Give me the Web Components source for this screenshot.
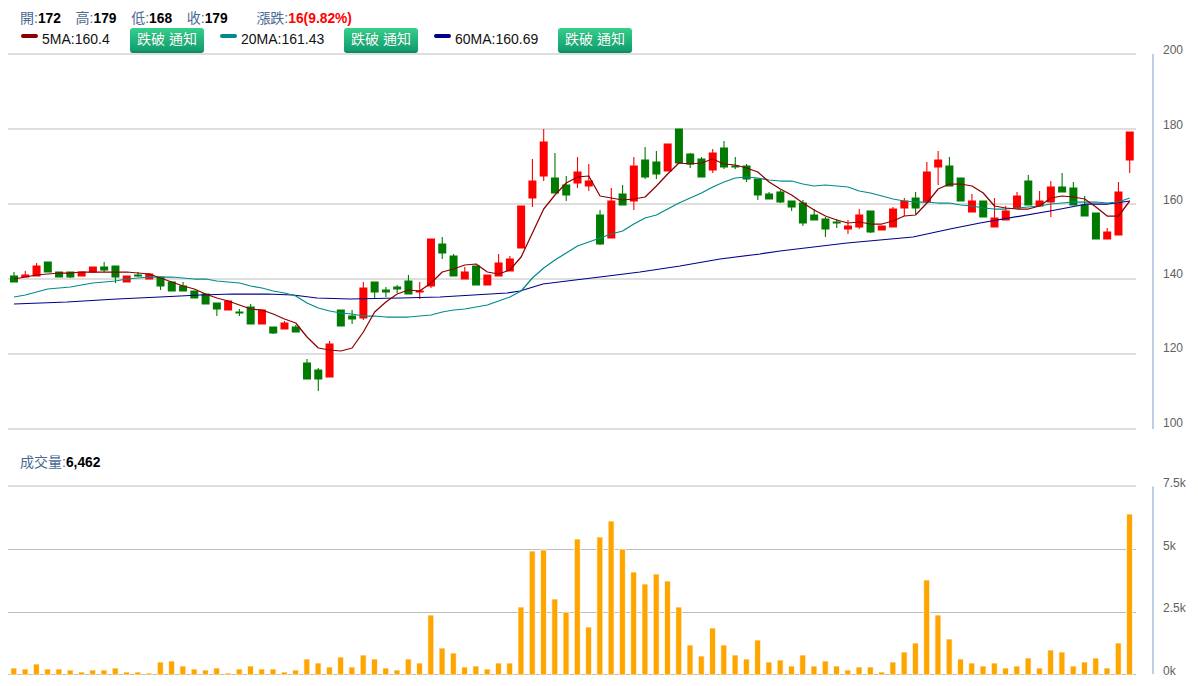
<!DOCTYPE html>
<html lang="zh-Hant">
<head>
<meta charset="utf-8">
<title>K線圖</title>
<style>
html,body{margin:0;padding:0;background:#fff;overflow:hidden}
</style>
</head>
<body>
<stock-view></stock-view>
<script>
const FONT = '"Liberation Sans","Noto Sans CJK TC",sans-serif';
const X = i => 14 + i * 11.27;

/* colour, body top, body bottom, wick top, wick bottom (screen pixels) */
const G='g',R='r';
const CANDLES=[
[G,276,282,272,282],[R,275,277,271,277],[R,266,276,263,276],[G,262,272,262,272],[G,272,277,272,277],
[G,272,277,272,278],[R,272,276,272,276],[R,267,272,267,272],[G,267,270,262,272],[G,266,277,266,283],
[R,276,282,276,282],[G,275,276,272,277],[R,274,279,273,279],[G,277,286,277,290],[G,282,291,282,291],
[G,286,291,282,291],[G,291,298,291,298],[G,294,304,294,304],[G,303,309,303,316],[R,301,310,301,310],
[G,312,313,309,316],[G,307,324,304,324],[R,310,324,310,324],[G,327,333,327,334],[R,323,329,321,329],
[G,327,332,325,332],[G,363,379,359,379],[G,370,379,368,391],[R,344,377,341,377],[G,310,326,310,326],
[G,316,319,310,324],[R,288,318,282,320],[G,282,292,282,299],[G,290,292,287,297],[G,287,289,285,293],
[G,281,294,275,294],[R,291,292,282,299],[R,239,286,239,288],[G,244,253,237,259],[G,256,276,254,276],
[R,272,279,267,279],[G,266,285,266,285],[R,275,285,275,285],[R,263,276,254,276],[R,259,271,256,271],
[R,206,248,206,248],[R,181,198,159,207],[R,142,176,129,181],[G,178,193,153,193],[G,185,195,176,201],
[R,172,183,157,188],[R,181,186,164,191],[G,215,244,210,245],[R,201,238,188,238],[G,194,205,185,205],
[R,166,201,157,210],[G,160,177,147,179],[G,162,174,151,179],[R,144,171,144,171],[G,129,163,129,163],
[G,154,164,153,168],[G,159,177,157,177],[R,153,170,149,173],[G,148,167,141,169],[G,166,167,157,169],
[G,166,179,164,182],[G,179,195,179,200],[G,194,199,192,199],[G,192,202,190,203],[G,201,207,201,211],
[G,203,223,200,226],[G,215,220,209,220],[G,219,229,217,237],[G,222,223,219,228],[R,226,229,220,234],
[R,215,227,209,229],[G,211,232,211,233],[R,226,230,226,230],[R,209,227,207,227],[R,201,208,198,216],
[G,198,208,192,214],[R,172,202,162,202],[R,160,167,151,185],[G,166,186,157,186],[G,178,201,178,201],
[R,201,212,194,212],[G,201,217,201,217],[R,218,227,198,227],[R,211,220,206,220],[R,196,208,192,208],
[G,181,205,175,205],[R,201,206,191,206],[R,187,202,181,217],[G,187,192,173,192],[G,188,205,182,205],
[G,205,216,196,216],[G,213,239,213,239],[R,232,239,228,239],[R,192,235,182,235],[R,132,160,132,173]
];
const MA5=[279,277,275,274,273,273,272,272,272,272,272,273,274,278,282,286,289,294,298,301,305,309,310,314,319,323,337,348,350,351,348,332,312,302,294,290,291,283,272,269,265,264,272,274,270,257,233,209,195,183,177,176,196,198,200,199,197,186,174,163,164,163,159,164,165,168,172,182,189,195,203,210,216,220,223,222,224,224,221,216,215,203,189,184,184,186,193,206,208,209,209,206,198,196,197,199,207,216,216,201];
const MA20=[297,295,292,289,288,287,285,283,282,281,279,278,277,277,277,278,279,279,281,282,283,286,288,291,293,296,303,308,311,313,314,316,316,317,317,317,316,315,312,310,309,307,305,301,297,291,278,268,260,253,246,242,238,234,231,224,218,215,209,203,198,193,187,182,178,177,178,180,181,181,184,186,185,186,187,191,193,196,199,201,202,202,203,203,205,206,208,209,209,208,207,206,204,203,202,202,202,203,202,198];
const MA60=[[14,304],[67,302],[117,299],[160,297],[200,295],[233,294],[267,294],[293,295],[317,298],[350,299],[400,298],[440,297],[507,293],[520,291],[543,284],[567,281],[600,277],[640,272],[680,266],[720,259],[760,254],[780,251],[847,243],[913,237],[950,229],[980,223],[1050,211],[1087,204],[1108,204],[1130,201]];
const VOL=[668,669,664,669,669,670,672,670,670,668,672,672,673,662,661,666,669,670,668,673,669,666,669,669,672,670,659,663,667,657,667,655,659,668,670,659,663,615,648,653,667,666,669,663,663,607,551,550,599,612,539,627,537,521,549,572,584,574,581,607,645,656,628,645,655,659,640,662,660,666,655,666,661,666,670,667,667,672,662,652,643,580,615,639,659,663,666,663,668,666,658,668,650,652,666,662,658,668,643,514];

const pts = (a) => a.map((y,i)=>`${X(i).toFixed(2)},${y}`).join(' ');
const hline = (y) => `<line x1="8" x2="1136" y1="${y}" y2="${y}" stroke="#bdbdbd"/>`;
const label = (t,y) => `<text x="1163" y="${y}">${t}</text>`;
const svgStyle = `:host{display:block}
svg{display:block;overflow:visible}
text{font:12px ${FONT};fill:#606060}`;

class NotifyButton extends HTMLElement{
  constructor(){super();this.attachShadow({mode:'open'}).innerHTML=`<style>
  :host{display:inline-flex;align-items:center;justify-content:center;box-sizing:border-box;width:74px;height:25px;
  padding-bottom:3px;border-radius:3px;color:#fff;font:14px ${FONT};white-space:pre;
  background:linear-gradient(#34d088,#129c70);border-bottom:2px solid #0f8a63;text-shadow:0 0 1px rgba(0,80,50,.3)}
  </style><slot></slot>`;}
}
class QuoteItem extends HTMLElement{
  constructor(){super();this.attachShadow({mode:'open'}).innerHTML=`<style>
  :host{display:inline-block;color:#4a6a94;white-space:nowrap}
  b{font-weight:bold;font-size:13.8px;color:var(--v,#000)}
  </style>${this.getAttribute('k')||''}:<b>${this.getAttribute('v')||''}</b>`;}
}
class MaLegend extends HTMLElement{
  constructor(){super();this.attachShadow({mode:'open'}).innerHTML=`<style>
  :host{display:flex;align-items:center;white-space:nowrap;color:#111;font-size:14px}
  i{display:block;width:17px;height:4px;border-radius:2px;background:${this.getAttribute('c')};margin:-9px 4px 0 0}
  span{display:block;width:var(--w);margin-top:-4px}
  </style><i></i><span>${this.getAttribute('t')}</span><slot></slot>`;}
}
class QuoteHeader extends HTMLElement{
  constructor(){super();this.attachShadow({mode:'open'}).innerHTML=`<style>
  :host{display:block;box-sizing:border-box;height:53px;padding:5px 0 0 20px;font:14px ${FONT}}
  .r1{display:flex;height:23px;align-items:center}
  .r2{display:flex;margin-left:1px}
  </style>
  <div class="r1"><slot name="q"></slot></div>
  <div class="r2"><slot name="m"></slot></div>`;}
}
class PricePanel extends HTMLElement{
  constructor(){super();
    const c={g:'#007a00',r:'#ff0000'};
    const candles=CANDLES.map((d,i)=>{const x=X(i),col=c[d[0]];
      return `<line x1="${x}" x2="${x}" y1="${d[3]}" y2="${d[4]}" stroke="${col}" stroke-width="1.1"/>`+
        `<rect x="${x-4}" width="8" y="${d[1]-.5}" height="${d[2]-d[1]+1}" fill="${col}"/>`;}).join('');
    const line=(p,col,w)=>`<polyline points="${p}" fill="none" stroke="${col}" stroke-width="${w}" stroke-linejoin="round"/>`;
    this.attachShadow({mode:'open'}).innerHTML=`<style>${svgStyle}</style>
    <svg width="1198" height="397" viewBox="0 53 1198 397">
      ${[54,129,204,279,354,429].map(hline).join('')}
      <line x1="1153" x2="1153" y1="54" y2="429" stroke="#bccfe6" stroke-width="2"/>
      ${candles}
      ${line(MA60.map(p=>p.join(',')).join(' '),'#00008b',1.25)}
      ${line(pts(MA20),'#008b8b',1.25)}
      ${line(pts(MA5),'#8b0000',1.25)}
      ${label(200,53.5)}${label(180,129)}${label(160,204)}${label(140,277.5)}${label(120,351.5)}${label(100,426.5)}
    </svg>`;}
}
class VolumePanel extends HTMLElement{
  constructor(){super();
    const bars=VOL.map((t,i)=>`<rect x="${(X(i)-3.2).toFixed(2)}" y="${t}" width="6" height="${675-t}" fill="#ffa500" stroke="#fff" stroke-opacity=".75"/>`).join('');
    this.attachShadow({mode:'open'}).innerHTML=`<style>${svgStyle}
    .cap{box-sizing:border-box;height:24px;padding-bottom:2px;font:14px ${FONT};color:#4a6a94;display:flex;align-items:center}
    .cap span{padding-left:20px}
    .cap b{font-size:13.8px;color:#000}</style>
    <div class="cap"><span>成交量:<b>6,462</b></span></div>
    <svg width="1198" height="212" viewBox="0 474 1198 212">
      ${[486,549.5,612.5,674.5].map(hline).join('')}
      <line x1="1153" x2="1153" y1="486.5" y2="674" stroke="#bccfe6" stroke-width="2"/>
      ${bars}
      ${label('7.5k',486.5)}${label('5k',549.5)}${label('2.5k',611.5)}${label('0k',674.5)}
    </svg>`;}
}
class StockView extends HTMLElement{
  constructor(){super();this.attachShadow({mode:'open'}).innerHTML=`<style>
  :host{display:block;width:1198px;height:686px;overflow:hidden}
  quote-item[k="開"],quote-item[k="高"],quote-item[k="低"]{width:55.6px}
  quote-item[k="收"]{width:69.6px}
  quote-item[k="漲跌"]{--v:#f00}
  ma-legend{--w:88px}
  ma-legend[c="#008b8b"]{--w:103px}
  ma-legend[c="#00008b"]{--w:103px}
  ma-legend:nth-of-type(2){margin-left:16px}
  ma-legend:nth-of-type(3){margin-left:16px}
  </style>
  <quote-header>
    <quote-item slot="q" k="開" v="172"></quote-item>
    <quote-item slot="q" k="高" v="179"></quote-item>
    <quote-item slot="q" k="低" v="168"></quote-item>
    <quote-item slot="q" k="收" v="179"></quote-item>
    <quote-item slot="q" k="漲跌" v="16(9.82%)"></quote-item>
    <ma-legend slot="m" c="#8b0000" t="5MA:160.4"><notify-button>跌破 通知</notify-button></ma-legend>
    <ma-legend slot="m" c="#008b8b" t="20MA:161.43"><notify-button>跌破 通知</notify-button></ma-legend>
    <ma-legend slot="m" c="#00008b" t="60MA:160.69"><notify-button>跌破 通知</notify-button></ma-legend>
  </quote-header>
  <price-panel></price-panel>
  <volume-panel></volume-panel>`;}
}
customElements.define('notify-button',NotifyButton);
customElements.define('quote-item',QuoteItem);
customElements.define('ma-legend',MaLegend);
customElements.define('quote-header',QuoteHeader);
customElements.define('price-panel',PricePanel);
customElements.define('volume-panel',VolumePanel);
customElements.define('stock-view',StockView);
</script>
</body>
</html>
